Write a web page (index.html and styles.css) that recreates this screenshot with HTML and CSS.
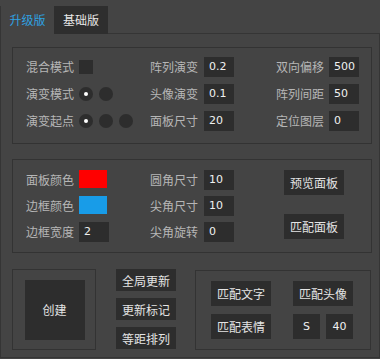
FILE: index.html
```
<!DOCTYPE html>
<html lang="zh">
<head>
    <meta charset="UTF-8">
    <title>面板工具</title>
    <link rel="stylesheet" href="styles.css">
</head>
<body>
    <div class="tabs">
        <div class="tab active">升级版</div>
        <div class="tab">基础版</div>
    </div>
    <div class="panel">

        <!-- 演变设置 -->
        <div class="group group-evo">
            <span class="label">混合模式</span>
            <span class="cell"><span class="check"></span></span>
            <span class="label">阵列演变</span>
            <span class="cell"><span class="field">0.2</span></span>
            <span class="label">双向偏移</span>
            <span class="cell"><span class="field">500</span></span>

            <span class="label">演变模式</span>
            <span class="cell radios"><span class="radio on"></span><span class="radio"></span></span>
            <span class="label">头像演变</span>
            <span class="cell"><span class="field">0.1</span></span>
            <span class="label">阵列间距</span>
            <span class="cell"><span class="field">50</span></span>

            <span class="label">演变起点</span>
            <span class="cell radios"><span class="radio on"></span><span class="radio"></span><span class="radio"></span></span>
            <span class="label">面板尺寸</span>
            <span class="cell"><span class="field">20</span></span>
            <span class="label">定位图层</span>
            <span class="cell"><span class="field">0</span></span>
        </div>

        <!-- 面板样式 -->
        <div class="group group-style">
            <div class="style-grid">
                <span class="label">面板颜色</span>
                <span class="cell"><span class="swatch red"></span></span>
                <span class="label">圆角尺寸</span>
                <span class="cell"><span class="field">10</span></span>

                <span class="label">边框颜色</span>
                <span class="cell"><span class="swatch blue"></span></span>
                <span class="label">尖角尺寸</span>
                <span class="cell"><span class="field">10</span></span>

                <span class="label">边框宽度</span>
                <span class="cell"><span class="field">2</span></span>
                <span class="label">尖角旋转</span>
                <span class="cell"><span class="field">0</span></span>
            </div>
            <div class="style-btns">
                <button class="btn">预览面板</button>
                <button class="btn">匹配面板</button>
            </div>
        </div>

        <div class="bottom">
            <div class="group group-create">
                <button class="btn create">创建</button>
            </div>
            <div class="tools">
                <button class="btn small">全局更新</button>
                <button class="btn small">更新标记</button>
                <button class="btn small">等距排列</button>
            </div>
            <div class="group group-match">
                <button class="btn">匹配文字</button>
                <button class="btn">匹配头像</button>
                <button class="btn">匹配表情</button>
                <div class="pair">
                    <span class="field box">S</span>
                    <span class="field box">40</span>
                </div>
            </div>
        </div>

    </div>
</body>
</html>
```

FILE: styles.css
```
body {
    margin: 0;
    background-color: #444444;
    font-family: "Noto Sans CJK SC", "Noto Sans", sans-serif;
    font-size: 12px;
    color: #b6b6b6;
}

/* tabs */
.tabs {
    display: flex;
    padding-top: 6px;
    margin-bottom: -1px;
    position: relative;
}

.tab {
    width: 54px;
    height: 28px;
    line-height: 27px;
    text-align: center;
    color: #e8e8e8;
    background-color: #2e2e2e;
    font-size: 12px;
}

.tab.active {
    color: #2fa2e2;
    background-color: #444444;
    border-left: 1px solid #353535;
    width: 53px;
}

/* main panel */
.panel {
    width: 380px;
    height: 325px;
    box-sizing: border-box;
    border: 1px solid #353535;
    padding: 13px 7px 0 11px;
}

.group {
    border: 1px solid #333333;
    box-sizing: border-box;
}

.label {
    line-height: 20px;
    white-space: nowrap;
}

.cell {
    display: flex;
    align-items: center;
}

.field {
    width: 30px;
    height: 20px;
    box-sizing: border-box;
    padding-left: 5px;
    background-color: #2d2d2d;
    color: #f0f0f0;
    font-family: "DejaVu Sans", sans-serif;
    font-size: 11px;
    line-height: 20px;
}

/* group 1 */
.group-evo {
    width: 360px;
    height: 97px;
    padding: 9px 0 0 13px;
    display: grid;
    grid-template-columns: 53px 71px 54px 72px 53px 30px;
    grid-template-rows: 20px 20px 20px;
    row-gap: 7px;
}

.check {
    width: 14px;
    height: 14px;
    background-color: #2d2d2d;
}

.radios {
    gap: 6px;
}

.radio {
    width: 14px;
    height: 14px;
    border-radius: 50%;
    background-color: #2d2d2d;
    display: flex;
    align-items: center;
    justify-content: center;
}

.radio.on::after {
    content: "";
    width: 4px;
    height: 4px;
    border-radius: 50%;
    background-color: #ffffff;
}

/* group 2 */
.group-style {
    width: 360px;
    height: 94px;
    margin-top: 15px;
    padding: 10px 0 0 13px;
    display: flex;
}

.style-grid {
    display: grid;
    grid-template-columns: 53px 71px 54px 72px;
    grid-template-rows: 20px 20px 20px;
    row-gap: 6px;
}

.swatch {
    width: 28px;
    height: 18px;
    align-self: flex-start;
}

.swatch.red {
    background-color: #ff0000;
}

.swatch.blue {
    background-color: #189ce8;
}

.style-btns {
    display: flex;
    flex-direction: column;
    gap: 19px;
    margin-left: 8px;
}

.btn {
    width: 60px;
    height: 25px;
    padding: 0;
    border: none;
    background-color: #2d2d2d;
    color: #e4e4e4;
    font-family: "Noto Sans CJK SC", "Noto Sans", sans-serif;
    font-size: 12px;
}

/* bottom row */
.bottom {
    display: flex;
    align-items: flex-start;
    margin-top: 16px;
}

.group-create {
    width: 84px;
    height: 81px;
    display: flex;
    align-items: center;
    justify-content: center;
    padding-left: 1px;
}

.btn.create {
    height: 60px;
}

.tools {
    display: flex;
    flex-direction: column;
    gap: 7px;
    margin-left: 20px;
}

.btn.small {
    height: 22px;
}

.group-match {
    width: 176px;
    height: 80px;
    margin-top: 1px;
    margin-left: 19px;
    padding: 10px 0 0 15px;
    display: grid;
    grid-template-columns: 60px 60px;
    grid-template-rows: 25px 25px;
    column-gap: 22px;
    row-gap: 8px;
}

.pair {
    display: flex;
    gap: 6px;
}

.field.box {
    width: 27px;
    height: 25px;
    line-height: 25px;
    padding: 0;
    text-align: center;
}
```
